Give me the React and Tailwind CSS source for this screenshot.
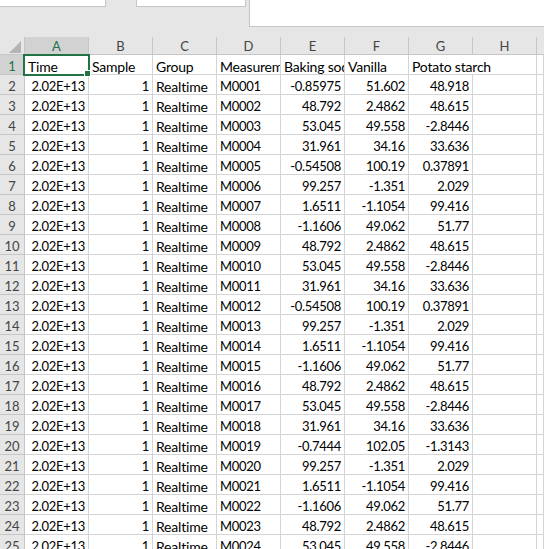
const rows = [
  ["M0001", "-0.85975", "51.602", "48.918"],
  ["M0002", "48.792", "2.4862", "48.615"],
  ["M0003", "53.045", "49.558", "-2.8446"],
  ["M0004", "31.961", "34.16", "33.636"],
  ["M0005", "-0.54508", "100.19", "0.37891"],
  ["M0006", "99.257", "-1.351", "2.029"],
  ["M0007", "1.6511", "-1.1054", "99.416"],
  ["M0008", "-1.1606", "49.062", "51.77"],
  ["M0009", "48.792", "2.4862", "48.615"],
  ["M0010", "53.045", "49.558", "-2.8446"],
  ["M0011", "31.961", "34.16", "33.636"],
  ["M0012", "-0.54508", "100.19", "0.37891"],
  ["M0013", "99.257", "-1.351", "2.029"],
  ["M0014", "1.6511", "-1.1054", "99.416"],
  ["M0015", "-1.1606", "49.062", "51.77"],
  ["M0016", "48.792", "2.4862", "48.615"],
  ["M0017", "53.045", "49.558", "-2.8446"],
  ["M0018", "31.961", "34.16", "33.636"],
  ["M0019", "-0.7444", "102.05", "-1.3143"],
  ["M0020", "99.257", "-1.351", "2.029"],
  ["M0021", "1.6511", "-1.1054", "99.416"],
  ["M0022", "-1.1606", "49.062", "51.77"],
  ["M0023", "48.792", "2.4862", "48.615"],
  ["M0024", "53.045", "49.558", "-2.8446"],
];

const letters = ["A", "B", "C", "D", "E", "F", "G", "H"];

const gridCols = "grid grid-cols-[25px_repeat(8,64px)_1fr]";
const cellBase =
  "h-[20px] border-r border-b border-[#d4d4d4] bg-white px-[3px] whitespace-nowrap overflow-hidden leading-[23px]";

function Cell({ children, right, num, className = "" }) {
  return (
    <div
      className={`${cellBase} ${right ? "text-right" : "text-left"} ${
        num ? "text-[13px] tracking-[-0.3px]" : "text-[14px] tracking-[-0.2px]"
      } ${className}`}
    >
      {children}
    </div>
  );
}

function RowHead({ n, active }) {
  return (
    <div
      className={`h-[20px] border-r border-b border-[#c6c6c6] text-center leading-[23px] text-[13px] overflow-hidden ${
        active ? "bg-[#d2d2d2] text-[#217346]" : "bg-[#e6e6e6] text-[#444444]"
      }`}
    >
      {n}
    </div>
  );
}

export default function App() {
  return (
    <div className="w-[544px] h-[549px] overflow-hidden bg-[#e6e6e6] text-black [font-family:Lato,'Noto_Sans',sans-serif]">
      <div className="h-[37px] flex items-start">
        <div className="w-[106px] h-[7px] bg-white border-r border-b border-[#c6c6c6]" />
        <div className="w-[30px]" />
        <div className="w-[110px] h-[7px] bg-white border-l border-r border-b border-[#c6c6c6]" />
        <div className="w-[3px]" />
        <div className="flex-1 h-[27px] bg-white border-l border-b border-[#c6c6c6]" />
      </div>

      <div className={gridCols}>
        <div className="h-[18px] bg-[#e6e6e6] border-r border-b border-[#c6c6c6] flex items-end justify-end pr-[3px] pb-[1px]">
          <svg width="12" height="12" viewBox="0 0 12 12">
            <polygon points="12,0 12,12 0,12" fill="#b4b4b4" />
          </svg>
        </div>
        {letters.map((l, i) => (
          <div
            key={l}
            className={`h-[18px] border-r border-b border-[#c6c6c6] text-center leading-[18px] text-[13px] ${
              i === 0 ? "bg-[#d2d2d2] text-[#217346]" : "bg-[#e6e6e6] text-[#444444]"
            }`}
          >
            {l}
          </div>
        ))}
        <div className="h-[18px] bg-[#e6e6e6] border-b border-[#c6c6c6]" />

        <RowHead n={1} active />
        <div className={`${cellBase} text-[14px] tracking-[-0.2px] relative overflow-visible`}>
          Time
          <div className="absolute -left-[2px] -top-[1px] -right-[2px] -bottom-[2px] border-2 border-[#217346] pointer-events-none">
            <div className="absolute -right-[3px] -bottom-[3px] w-[7px] h-[7px] bg-[#217346] border border-white" />
          </div>
        </div>
        <Cell>Sample</Cell>
        <Cell>Group</Cell>
        <Cell>Measurement</Cell>
        <Cell>Baking soda</Cell>
        <Cell>Vanilla</Cell>
        <Cell className="col-span-2">Potato starch</Cell>
        <Cell />

        {rows.map((r, i) => (
          <div key={i} className="contents">
            <RowHead n={i + 2} />
            <Cell right num>2.02E+13</Cell>
            <Cell right num>1</Cell>
            <Cell>Realtime</Cell>
            <Cell num>{r[0]}</Cell>
            <Cell right num>{r[1]}</Cell>
            <Cell right num>{r[2]}</Cell>
            <Cell right num>{r[3]}</Cell>
            <Cell />
            <Cell />
          </div>
        ))}
      </div>
    </div>
  );
}
